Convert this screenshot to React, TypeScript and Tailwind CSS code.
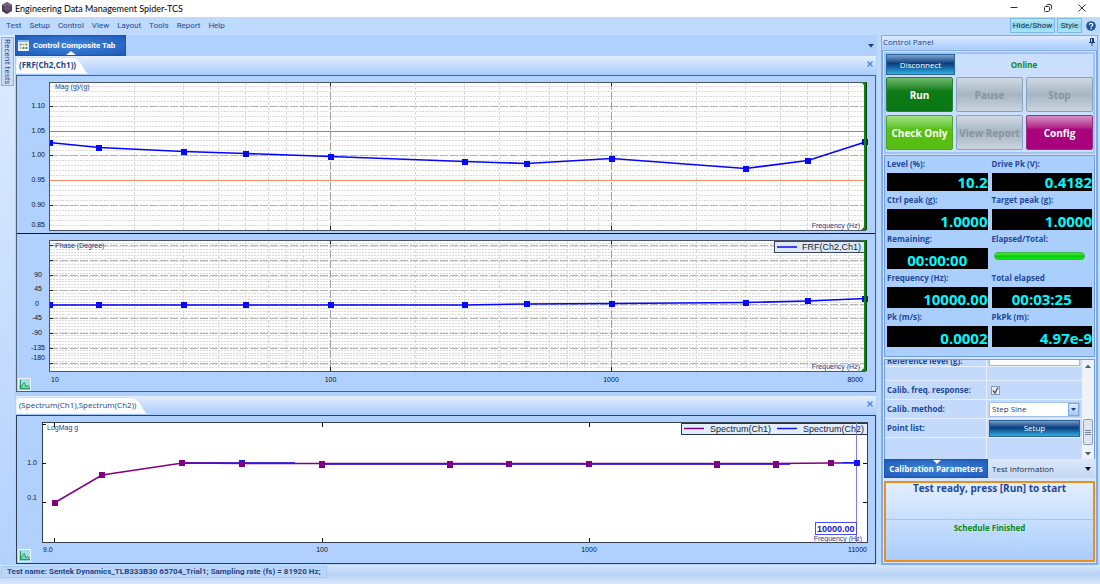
import React from "react";

const uiFont = "font-['Open_Sans','Noto_Sans',sans-serif]";
const chromeFont = "font-[Roboto,'Noto_Sans',sans-serif]";

/* ---------- chart helpers ---------- */

const DECADE = 281;
const frfX = (hz: number) => 49.5 + DECADE * Math.log10(hz / 10);
const specX = (hz: number) => 55 + 267.2 * Math.log10(hz / 10);

const FREQS = [10, 15, 30, 50, 100, 300, 500, 1000, 3000, 5000, 8000];
const FRF_Y = [142.5, 147.5, 151.5, 153.5, 156.5, 161.5, 163.5, 158.5, 168.5, 160.5, 142];
const PHASE_Y = [305, 305, 305, 305, 305, 305, 304, 303.5, 302.5, 301, 298.5];
const SPEC_FREQS = [10, 15, 30, 50, 100, 300, 500, 1000, 3000, 5000, 8000, 10000];
const SPEC_Y = [502.5, 475, 463, 463.5, 463.5, 463.5, 463.5, 463.5, 463.5, 463.5, 463, 463];

const minorFreqs: number[] = [];
for (const base of [10, 100, 1000]) {
  for (let m = 2; m < 10; m++) if (base * m < 8000) minorFreqs.push(base * m);
}

function range(from: number, to: number, step: number, skip: number[] = []) {
  const out: number[] = [];
  for (let v = from; v < to; v += step) {
    const y = Math.round(v) + 0.5;
    if (!skip.some((s) => Math.abs(s - y) < 2)) out.push(y);
  }
  return out;
}

function Label({ x, y, children, anchor = "end", size = 7, fill = "#10131c", bold = false }: {
  x: number; y: number; children: string; anchor?: "start" | "middle" | "end"; size?: number; fill?: string; bold?: boolean;
}) {
  return (
    <text x={x} y={y} textAnchor={anchor} fontSize={size} fill={fill} fontWeight={bold ? 700 : 400}
      fontFamily="'Liberation Sans', sans-serif">{children}</text>
  );
}

function Grid({ top, bottom, minors, majors }: { top: number; bottom: number; minors: number[]; majors: number[] }) {
  return (
    <g shapeRendering="crispEdges">
      <rect x={49} y={top} width={817} height={bottom - top} fill="#fff" />
      {minors.map((y) => (
        <line key={y} x1={50} x2={865} y1={y} y2={y} stroke="#dadada" strokeDasharray="2 1" />
      ))}
      {minorFreqs.map((f) => (
        <line key={f} x1={frfX(f)} x2={frfX(f)} y1={top} y2={bottom} stroke="#dadada" strokeDasharray="3 2" />
      ))}
      {majors.map((y) => (
        <g key={y}>
          <line x1={50} x2={865} y1={y} y2={y} stroke="#b4b4b4" strokeDasharray="8 2" />
          <line x1={50} x2={53} y1={y} y2={y} stroke="#222" />
        </g>
      ))}
      {[100, 1000].map((f) => (
        <g key={f}>
          <line x1={frfX(f)} x2={frfX(f)} y1={top} y2={bottom} stroke="#a0a0a0" strokeDasharray="8 2" />
          <line x1={frfX(f)} x2={frfX(f)} y1={top} y2={top + 4} stroke="#222" />
          <line x1={frfX(f)} x2={frfX(f)} y1={bottom - 4} y2={bottom} stroke="#222" />
        </g>
      ))}
    </g>
  );
}

function Frame({ top, bottom }: { top: number; bottom: number }) {
  return (
    <g>
      <rect x={49.5} y={top + 0.5} width={816} height={bottom - top} fill="none" stroke="#4b5563" shapeRendering="crispEdges" />
      <line x1={865} x2={865} y1={top} y2={bottom} stroke="#0a860f" strokeWidth={2} />
      <line x1={866.5} x2={866.5} y1={top} y2={bottom} stroke="#173a17" />
      <path d={`M861 ${top}h4v4z M861 ${bottom}h4v-4z`} fill="#0a860f" />
    </g>
  );
}

function Series({ xs, ys, color, size = 6, width = 1.6 }: { xs: number[]; ys: number[]; color: string; size?: number; width?: number }) {
  return (
    <g>
      <polyline points={xs.map((x, i) => `${x},${ys[i]}`).join(" ")} fill="none" stroke={color} strokeWidth={width} />
      {xs.map((x, i) => (
        <rect key={x} x={Math.round(x - size / 2)} y={Math.round(ys[i] - size / 2)} width={size} height={size} fill={color} />
      ))}
    </g>
  );
}

function FrfChart() {
  const mags: [string, number][] = [["1.10", 106], ["1.05", 131], ["1.00", 155], ["0.95", 180], ["0.90", 205]];
  const phases: [string, number][] = [["90", 275], ["45", 289], ["0", 304], ["-45", 318], ["-90", 333], ["-135", 348], ["-180", 358]];
  const xs = FREQS.map(frfX);
  return (
    <svg viewBox="16 75 860 317" className="block h-auto w-full" role="img" aria-label="FRF magnitude and phase">
      <rect x={16} y={75} width={860} height={317} fill="#b0d1fe" />
      <rect x={16.5} y={75.5} width={859} height={316} fill="none" stroke="#4d6079" />
      <Grid top={82} bottom={230} minors={range(86, 229, 4.95, [131.5, 180.5])} majors={[106.5, 155.5, 205.5]} />
      <rect x={50} y={131} width={815} height={1} fill="#f0683c" />
      <rect x={50} y={180} width={815} height={1} fill="#fb8a62" />
      <Series xs={xs} ys={FRF_Y} color="#0606fa" />
      <Frame top={82} bottom={230} />
      <rect x={17} y={138} width={32} height={9} fill="#b0d1fe" />
      {mags.map(([t, y]) => <Label key={t} x={45} y={y + 2}>{t}</Label>)}
      <Label x={45} y={227}>0.85</Label>
      <Label x={55} y={89} anchor="start" fill="#1d3c86">Mag (g)/(g)</Label>
      <Label x={860} y={228} fill="#1d3c86">Frequency (Hz)</Label>

      <line x1={17} x2={875} y1={233.5} y2={233.5} stroke="#0e1626" />
      <Grid top={240} bottom={371} minors={range(243, 370, 2.96)} majors={[245.5, 260.5, 275.5, 290.5, 304.5, 318.5, 333.5, 348.5, 363.5]} />
      <Series xs={xs} ys={PHASE_Y} color="#0606fa" />
      <Frame top={240} bottom={371} />
      <rect x={17} y={300} width={32} height={10} fill="#b0d1fe" />
      {phases.map(([t, y]) => <Label key={t} x={t === "0" ? 39 : t.length > 3 ? 45 : 42} y={y + 2}>{t}</Label>)}
      <Label x={55} y={248} anchor="start" fill="#1d3c86">Phase (Degree)</Label>
      <Label x={860} y={369} fill="#1d3c86">Frequency (Hz)</Label>
      <rect x={774.5} y={241.5} width={90} height={11} fill="#dde9f9" stroke="#38475e" />
      <line x1={777} x2={797} y1={247} y2={247} stroke="#1616f0" strokeWidth={1.6} />
      <Label x={802} y={250} anchor="start" size={9} fill="#1b2233">FRF(Ch2,Ch1)</Label>
      <line x1={865} x2={865} y1={241} y2={255} stroke="#0a860f" strokeWidth={2} />
      <Label x={51} y={382} anchor="start">10</Label>
      <Label x={330.5} y={382} anchor="middle">100</Label>
      <Label x={611} y={382} anchor="middle">1000</Label>
      <Label x={863} y={382}>8000</Label>
      <ChartBadge x={18} y={378} />
    </svg>
  );
}

function ChartBadge({ x, y }: { x: number; y: number }) {
  return (
    <g transform={`translate(${x} ${y})`}>
      <rect x={0.5} y={0.5} width={12} height={12} fill="#a4dcea" stroke="#e9f5fb" />
      <rect x={1} y={7} width={11} height={5} fill="#74cdb8" opacity={0.6} />
      <path d="M2.500 2v8.500H12M2.500 10.500 5 6l1.200-1.500L8 9l1.500-1.500L11.500 9.500" fill="none" stroke="#23a052" strokeWidth={1} />
    </g>
  );
}

function SpectrumChart() {
  const xs = SPEC_FREQS.map(specX);
  return (
    <svg viewBox="16 415 860 149" className="block h-auto w-full" role="img" aria-label="Spectrum of channels 1 and 2">
      <rect x={16} y={415} width={860} height={149} fill="#b0d1fe" />
      <rect x={16.5} y={415.5} width={859} height={148} fill="none" stroke="#2f4058" />
      <rect x={42.5} y={422.5} width={825} height={120} fill="#fff" stroke="#39424f" />
      <path d="M42 424.500h4M42 463.500h4M42 502.500h4M54.500 423v4M322.500 423v4M589.500 423v4M54.500 542v-4M322.500 542v-4M589.500 542v-4M863 463.500h4M863 502.500h4" stroke="#111" fill="none" />
      <Label x={47} y={430} anchor="start" fill="#1d3c86">LogMag g</Label>
      <Label x={37} y={465}>1.0</Label>
      <Label x={37} y={500}>0.1</Label>
      <Label x={43} y={552} anchor="start">9.0</Label>
      <Label x={322} y={552} anchor="middle">100</Label>
      <Label x={589} y={552} anchor="middle">1000</Label>
      <Label x={867} y={552}>11000</Label>
      <rect x={681.5} y={423.5} width={186} height={11} fill="#e2edfd" stroke="#2c3545" />
      <line x1={684} x2={704} y1={428.5} y2={428.5} stroke="#800080" strokeWidth={1.5} />
      <Label x={710} y={432} anchor="start" size={9} fill="#1b2233">Spectrum(Ch1)</Label>
      <line x1={777} x2={797} y1={428.5} y2={428.5} stroke="#1616f0" strokeWidth={1.5} />
      <Label x={803} y={432} anchor="start" size={9} fill="#1b2233">Spectrum(Ch2)</Label>
      <line x1={856.5} x2={856.5} y1={423} y2={543} stroke="#7d7df5" />
      <path d="M182 462.500H295M322 464.500H790" stroke="#3a3aff" fill="none" />
      {[3, 4, 5, 8, 9].map((i) => (
        <rect key={i} x={Math.round(xs[i] - 3)} y={i === 3 ? 460 : 462} width={6} height={6} fill="#1414f4" />
      ))}
      <Series xs={xs} ys={SPEC_Y} color="#800080" width={1.5} />
      <path d="M842 462.500h14" stroke="#1414ff" />
      <rect x={854} y={460} width={5} height={6} fill="#1414ff" />
      <rect x={815.5} y={522.5} width={41} height={12} fill="#fff" stroke="#4b4bf2" />
      <Label x={817} y={532} anchor="start" size={9} bold fill="#1515d8">10000.00</Label>
      <Label x={862} y={541} fill="#1d3c86">Frequency (Hz)</Label>
      <ChartBadge x={18} y={549} />
    </svg>
  );
}

/* ---------- window chrome ---------- */

function TitleBar() {
  return (
    <header className="flex h-[17px] items-center bg-white pb-px pl-[2px]">
      <svg width="10" height="12" viewBox="0 0 10 12" aria-hidden="true">
        <path d="M5 0 10 3v6l-5 3-5-3V3z" fill="#55455f" />
        <path d="M5 0 10 3 5 6 0 3z" fill="#75657f" />
        <path d="M5 6v6L0 9V3z" fill="#493a55" />
        <path d="M2 4.500 5 3l3 1.500v3L5 9 2 7.500z" fill="#675374" />
      </svg>
      <h1 className="ml-[3px] font-[Lato,'Noto_Sans',sans-serif] text-[9px] leading-none whitespace-nowrap text-black">Engineering Data Management Spider-TCS</h1>
      <div className="ml-auto flex items-center gap-[26px] pr-[14px]">
        <button aria-label="Minimize"><svg width="8" height="8" viewBox="0 0 8 8"><path d="M.5 3.500h7" stroke="#333" /></svg></button>
        <button aria-label="Restore"><svg width="8" height="8" viewBox="0 0 8 8" fill="none" stroke="#333"><rect x=".5" y="2.500" width="5" height="5" rx="1" /><path d="M2.500 1.500Q2.700.5 3.700.5h2.300Q7.500.5 7.500 2v2.300q0 1-1 1.200" /></svg></button>
        <button aria-label="Close"><svg width="8" height="8" viewBox="0 0 8 8"><path d="m.5.5 7 7m0-7-7 7" stroke="#333" /></svg></button>
      </div>
    </header>
  );
}

const chromeBtn = "h-[15px] border border-[#7fb8e0] bg-linear-to-b from-[#b5e8f8] via-[#8fd3ee] to-[#a9e6f6]";

function MenuBar() {
  return (
    <nav className="flex h-[18px] items-center bg-[#bfdaff] pr-1 pb-px pl-[6px] text-[8px] text-[#1d4a93]">
      <div className={`flex gap-2 ${chromeFont}`}>
        {["Test", "Setup", "Control", "View", "Layout", "Tools", "Report", "Help"].map((m) => <button key={m}>{m}</button>)}
      </div>
      <div className="ml-auto flex items-center gap-[2px] text-[#12314f]">
        <button className={`${chromeBtn} w-[45px] ${chromeFont}`}>Hide/Show</button>
        <button className={`${chromeBtn} w-[25px] ${chromeFont}`}>Style</button>
        <button aria-label="Help" className="ml-[2px]">
          <svg width="10" height="10" viewBox="0 0 10 10">
            <circle cx="5" cy="5" r="4.800" fill="#1c5798" />
            <path d="M3.300 3.800C3.300 1.800 6.800 1.800 6.800 3.800 6.800 5 5.100 5 5.100 6.200M5.100 7.100v1.200" stroke="#fff" strokeWidth="1.200" fill="none" />
          </svg>
        </button>
      </div>
    </nav>
  );
}

function ViewStrip({ title, bold, width }: { title: string; bold?: boolean; width: number }) {
  return (
    <div className="flex h-[19px] items-start justify-between bg-linear-to-b from-[#e3eefe] to-[#a9cbfa] pt-px pr-[3px]">
      <div className="relative h-[17px]">
        <svg width={width} height="17" viewBox={`0 0 ${width} 17`} className="block" aria-hidden="true">
          <path d={`M0 17V3Q0 .5 2.500 .5H${width - 18}Q${width - 13} .5 ${width - 10} 6L${width - 6} 13Q${width - 4} 17 ${width} 17Z`} fill="#fbfdff" stroke="#bcd3f3" strokeWidth=".6" />
        </svg>
        <h2 className={`absolute inset-0 pl-[3px] text-[8px] leading-[15px] whitespace-nowrap text-[#1d4688] ${bold ? "font-bold" : ""}`}>{title}</h2>
      </div>
      <button aria-label="Close view" className="mt-[4px]">
        <svg width="6" height="6" viewBox="0 0 6 6" className="block"><path d="m.5.5 5 5m0-5-5 5" stroke="#3f83dc" strokeWidth="1.200" /></svg>
      </button>
    </div>
  );
}

function Workspace() {
  return (
    <main className="flex min-w-0 flex-1 flex-col bg-[#b0d1fe]">
      <div className="flex h-[21px] items-center justify-between pr-[3px]">
        <button className={`relative flex h-[21px] w-[111px] items-center gap-1 border border-[#1d56b0] bg-radial from-[#3f86da] to-[#2059b8] pl-[2px] text-[9px] font-bold whitespace-nowrap text-white ${chromeFont}`}>
          <svg width="11" height="11" viewBox="0 0 11 11" aria-hidden="true" className="shrink-0">
            <rect width="11" height="11" rx="1" fill="#eef5ff" />
            <path d="M0 0h11v2H0z" fill="#79b2ee" />
            <path d="M1.500 3.500h2v2h-2z" fill="#4b92e0" /><path d="M4.500 3.500h2v2h-2z" fill="#f0a030" /><path d="M7.500 3.500h2v2h-2z" fill="#6aae38" />
            <path d="M1.500 7h2v2h-2z" fill="#e8b23a" /><path d="M4.500 7h2v2h-2z" fill="#4ba052" /><path d="M7.500 7h2v2h-2z" fill="#4582cf" />
          </svg>
          <span className="text-[8px]">Control Composite Tab</span>
          <svg width="10" height="4" viewBox="0 0 10 4" className="absolute bottom-0 left-[50px]" aria-hidden="true"><path d="M0 4 5 0l5 4z" fill="#eef5ff" /></svg>
        </button>
        <button aria-label="Tab list"><svg width="6" height="4" viewBox="0 0 6 4"><path d="M0 0h6L3 3.500z" fill="#153b7d" /></svg></button>
      </div>
      <section className="px-px">
        <ViewStrip title="(FRF(Ch2,Ch1))" bold width={75} />
        <FrfChart />
      </section>
      <section className="px-px pt-[4px]">
        <ViewStrip title="(Spectrum(Ch1),Spectrum(Ch2))" width={134} />
        <SpectrumChart />
      </section>
    </main>
  );
}

/* ---------- control panel ---------- */

const glossy = "h-[35px] rounded-[2px] border text-[10px] font-bold leading-none whitespace-nowrap";
const disabledBtn = `${glossy} border-[#8ba2bb] bg-linear-to-b from-[#d0dae3] via-[#a5b5c2] to-[#cbd5df] text-[#8b959e]`;

function ActionButtons() {
  return (
    <div className="border-2 border-[#a0c4f4] bg-[#c9dffd] pb-[2px]">
      <div className="mb-[2px] flex h-[21px] items-center">
        <button className="h-[21px] w-[69px] border border-[#2c6395] bg-linear-to-b from-[#7fa6d2] via-[#0c3c7c] via-45% to-[#31b0e2] text-[8px] text-white">Disconnect</button>
        <output className="flex-1 text-center text-[8px] font-bold text-[#0c8a16]">Online</output>
      </div>
      <div className="grid grid-cols-3 gap-[3px]">
        <button className={`${glossy} border-[#2a7d3c] bg-linear-to-b from-[#6dba6d] via-[#0c7c15] via-40% to-[#0a7714] text-white`}>Run</button>
        <button disabled className={disabledBtn}>Pause</button>
        <button disabled className={disabledBtn}>Stop</button>
        <button className={`${glossy} border-[#4fa52a] bg-linear-to-b from-[#a3e283] via-[#58c014] via-40% to-[#57bd12] text-white`}>Check Only</button>
        <button disabled className={disabledBtn}>View Report</button>
        <button className={`${glossy} border-[#94337f] bg-linear-to-b from-[#d58dc6] via-[#ab027e] via-40% to-[#a8007a] text-white`}>Config</button>
      </div>
    </div>
  );
}

const readingLabel = "h-[14px] text-[8px] leading-[10px] font-bold text-[#22489a]";

function Reading({ label, value, centered, short }: { label: string; value: string; centered?: boolean; short?: boolean }) {
  return (
    <div>
      <div className={readingLabel}>{label}</div>
      <output className={`flex items-end bg-black text-[15px] leading-[18px] font-bold text-[#00f7fb] ${short ? "h-[18px]" : "h-[21px]"} ${centered ? "justify-center" : "justify-end"}`}>{value}</output>
    </div>
  );
}

function Readings() {
  return (
    <div className="grid grid-cols-2 gap-x-1 gap-y-[4px] border border-[#6f9fdc] bg-[#abcffd] pt-[3px] pr-[2px] pb-[9px] pl-[2px]">
      <Reading label="Level (%):" value="10.2" short />
      <Reading label="Drive Pk (V):" value="0.4182" short />
      <Reading label="Ctrl peak (g):" value="1.0000" />
      <Reading label="Target peak (g):" value="1.0000" />
      <Reading label="Remaining:" value="00:00:00" centered />
      <div>
        <div className={readingLabel}>Elapsed/Total:</div>
        <div role="progressbar" aria-label="Elapsed/Total" aria-valuenow={100} className="mt-[4px] mr-[7px] ml-[2px] h-2 rounded-full border border-[#35b83d] bg-linear-to-b from-[#4bea3b] via-[#03cb06] to-[#14e51a]" />
      </div>
      <Reading label="Frequency (Hz):" value="10000.00" />
      <Reading label="Total elapsed" value="00:03:25" centered />
      <Reading label="Pk (m/s):" value="0.0002" />
      <Reading label="PkPk (m):" value="4.97e-9" />
    </div>
  );
}

const paramLabel = "flex items-center border-r border-b border-[#e6f0ff] pl-[2px] font-bold text-[#22489a]";
const paramCell = "flex items-center border-b border-[#e6f0ff] px-[2px]";

function Parameters() {
  return (
    <div className="mt-[2px] flex border border-b-0 border-[#6f9fdc] bg-[#c3dafd] text-[8px]">
      <div className="grid flex-1 grid-cols-[102px_1fr] grid-rows-[7px_14px_19px_19px_19px_21px]">
        <label htmlFor="ref-level" className={`${paramLabel} items-end overflow-hidden leading-[10px]`}>Reference level (g):</label>
        <div className={`${paramCell} items-end overflow-hidden`}><input id="ref-level" className="h-4 w-full border border-[#9bbbe4] bg-white" /></div>
        <div className={paramLabel} /><div className={paramCell} />
        <label htmlFor="calib-freq" className={paramLabel}>Calib. freq. response:</label>
        <div className={paramCell}>
          <input id="calib-freq" type="checkbox" defaultChecked className="peer ml-[2px] h-[9px] w-[9px] appearance-none border border-[#8d9aab] bg-[#e8ecf1]" />
          <svg width="7" height="7" viewBox="0 0 7 7" className="pointer-events-none -ml-2 hidden peer-checked:block" aria-hidden="true"><path d="m1 3.500 2 2.500 3-5.500" stroke="#40506e" strokeWidth="1.400" fill="none" /></svg>
        </div>
        <label htmlFor="calib-method" className={paramLabel}>Calib. method:</label>
        <div className={`${paramCell} relative`}>
          <select id="calib-method" className="h-[15px] w-full appearance-none border border-[#a4c2ea] bg-white pl-[2px] text-[8px] leading-none text-[#22406f]"><option>Step Sine</option></select>
          <span className="pointer-events-none absolute right-[3px] flex h-[13px] w-[11px] items-center justify-center border border-[#7ba8e0] bg-linear-to-b from-[#e0edff] to-[#a4c9fa]">
            <svg width="5" height="3" viewBox="0 0 5 3" aria-hidden="true"><path d="M0 0h5L2.500 3z" fill="#1d3c86" /></svg>
          </span>
        </div>
        <div className={paramLabel}>Point list:</div>
        <div className={paramCell}>
          <button className="h-[17px] w-full border border-[#2c6395] bg-linear-to-b from-[#6f9ccb] via-[#0c3c7c] via-45% to-[#31b0e2] text-white">Setup</button>
        </div>
        <div className="border-r border-[#e6f0ff]" /><div />
      </div>
      <div className="flex w-[12px] flex-col items-center bg-[#eef2f9] pt-[4px] pb-[3px]">
        <svg width="6" height="4" viewBox="0 0 6 4" aria-hidden="true"><path d="M0 4h6L3 .5z" fill="#4c5d7c" /></svg>
        <div className="mt-auto mb-[7px] flex h-[26px] w-[10px] flex-col items-center justify-center gap-px rounded-[2px] border border-[#8f9eb5] bg-[#dfe5ee]">
          <span className="h-px w-[6px] bg-[#7787a0]" /><span className="h-px w-[6px] bg-[#7787a0]" /><span className="h-px w-[6px] bg-[#7787a0]" />
        </div>
        <svg width="6" height="4" viewBox="0 0 6 4" aria-hidden="true"><path d="M0 0h6L3 3.500z" fill="#4c5d7c" /></svg>
      </div>
    </div>
  );
}

function ControlPanel() {
  return (
    <aside className="flex w-[217px] shrink-0 flex-col border border-[#86aee6] bg-[#b7d5fe]">
      <div className="flex h-[13px] items-center justify-between bg-linear-to-b from-[#dceaff] to-[#aaccfb] pr-[2px] pb-px pl-px text-[8px] leading-3 text-[#1d4688]">
        <h2>Control Panel</h2>
        <button aria-label="Pin panel"><svg width="6" height="8" viewBox="0 0 6 8"><path d="M1.500.5h3v4h-3zM3.500.5v4M0 4.500h6M3 4.500V8" fill="none" stroke="#153b7d" /></svg></button>
      </div>
      <div className="mt-px flex flex-1 flex-col border border-[#7fa9e4] bg-[#d5e5fd] p-px">
        <ActionButtons />
        <div className="mt-px"><Readings /></div>
        <Parameters />
        <div className="flex h-[19px] items-center bg-linear-to-b from-[#dce9fb] to-[#c3d7f3] text-[8px]">
          <button className="relative h-[19px] w-[104px] border border-[#1d56b0] bg-radial from-[#3f86da] to-[#2059b8] font-bold whitespace-nowrap text-white">
            Calibration Parameters
            <svg width="8" height="4" viewBox="0 0 8 4" className="absolute top-0 left-[48px]" aria-hidden="true"><path d="M0 0h8L4 4z" fill="#eef5ff" /></svg>
          </button>
          <button className="ml-1 text-[#1f2a44]">Test Information</button>
          <button aria-label="More tabs" className="mr-1 ml-auto"><svg width="6" height="4" viewBox="0 0 6 4"><path d="M0 0h6L3 4z" fill="#111" /></svg></button>
        </div>
        <div className="mt-[3px] flex flex-1 flex-col border-2 border-[#e98f1c] bg-linear-to-b from-[#e2eeff] to-[#aacdfe] text-center font-bold">
          <p className="h-[37px] border-b border-[#a9c6ee] text-[10px] leading-[10px] text-[#22489a]">Test ready, press [Run] to start</p>
          <p className="mt-[2px] text-[8px] leading-3 text-[#0c8a16]">Schedule Finished</p>
        </div>
      </div>
    </aside>
  );
}

export default function App() {
  return (
    <div className={`flex min-h-screen flex-col bg-[#bfdaff] ${uiFont}`}>
      <TitleBar />
      <MenuBar />
      <div className="flex flex-1 gap-[4px] pr-[2px]">
        <div className="flex min-w-0 flex-1">
          <div className="w-[15px] shrink-0 bg-linear-to-b from-[#dfebff] to-[#b2d2fe] pt-[2px] pl-px">
            <button className="flex h-[49px] w-[13px] items-center justify-center border border-[#8bb2e8] bg-[#c6dcfd] text-[8px] leading-none whitespace-nowrap text-[#1f3762] [writing-mode:vertical-rl]">Recent tests</button>
          </div>
          <Workspace />
        </div>
        <ControlPanel />
      </div>
      <footer className="flex h-[19px] items-start bg-linear-to-b from-[#d6e6fc] via-[#b9d3f6] to-[#d9e7fb] pt-px pl-px">
        <p className={`h-[12px] border border-[#a6c5f0] bg-[#bcd6fb] px-[5px] text-[8px] leading-[10px] font-bold whitespace-nowrap text-[#1f4686] ${chromeFont}`}>
          Test name: Sentek Dynamics_TLB333B30 65704_Trial1; Sampling rate (fs) = 81920 Hz;
        </p>
      </footer>
    </div>
  );
}
